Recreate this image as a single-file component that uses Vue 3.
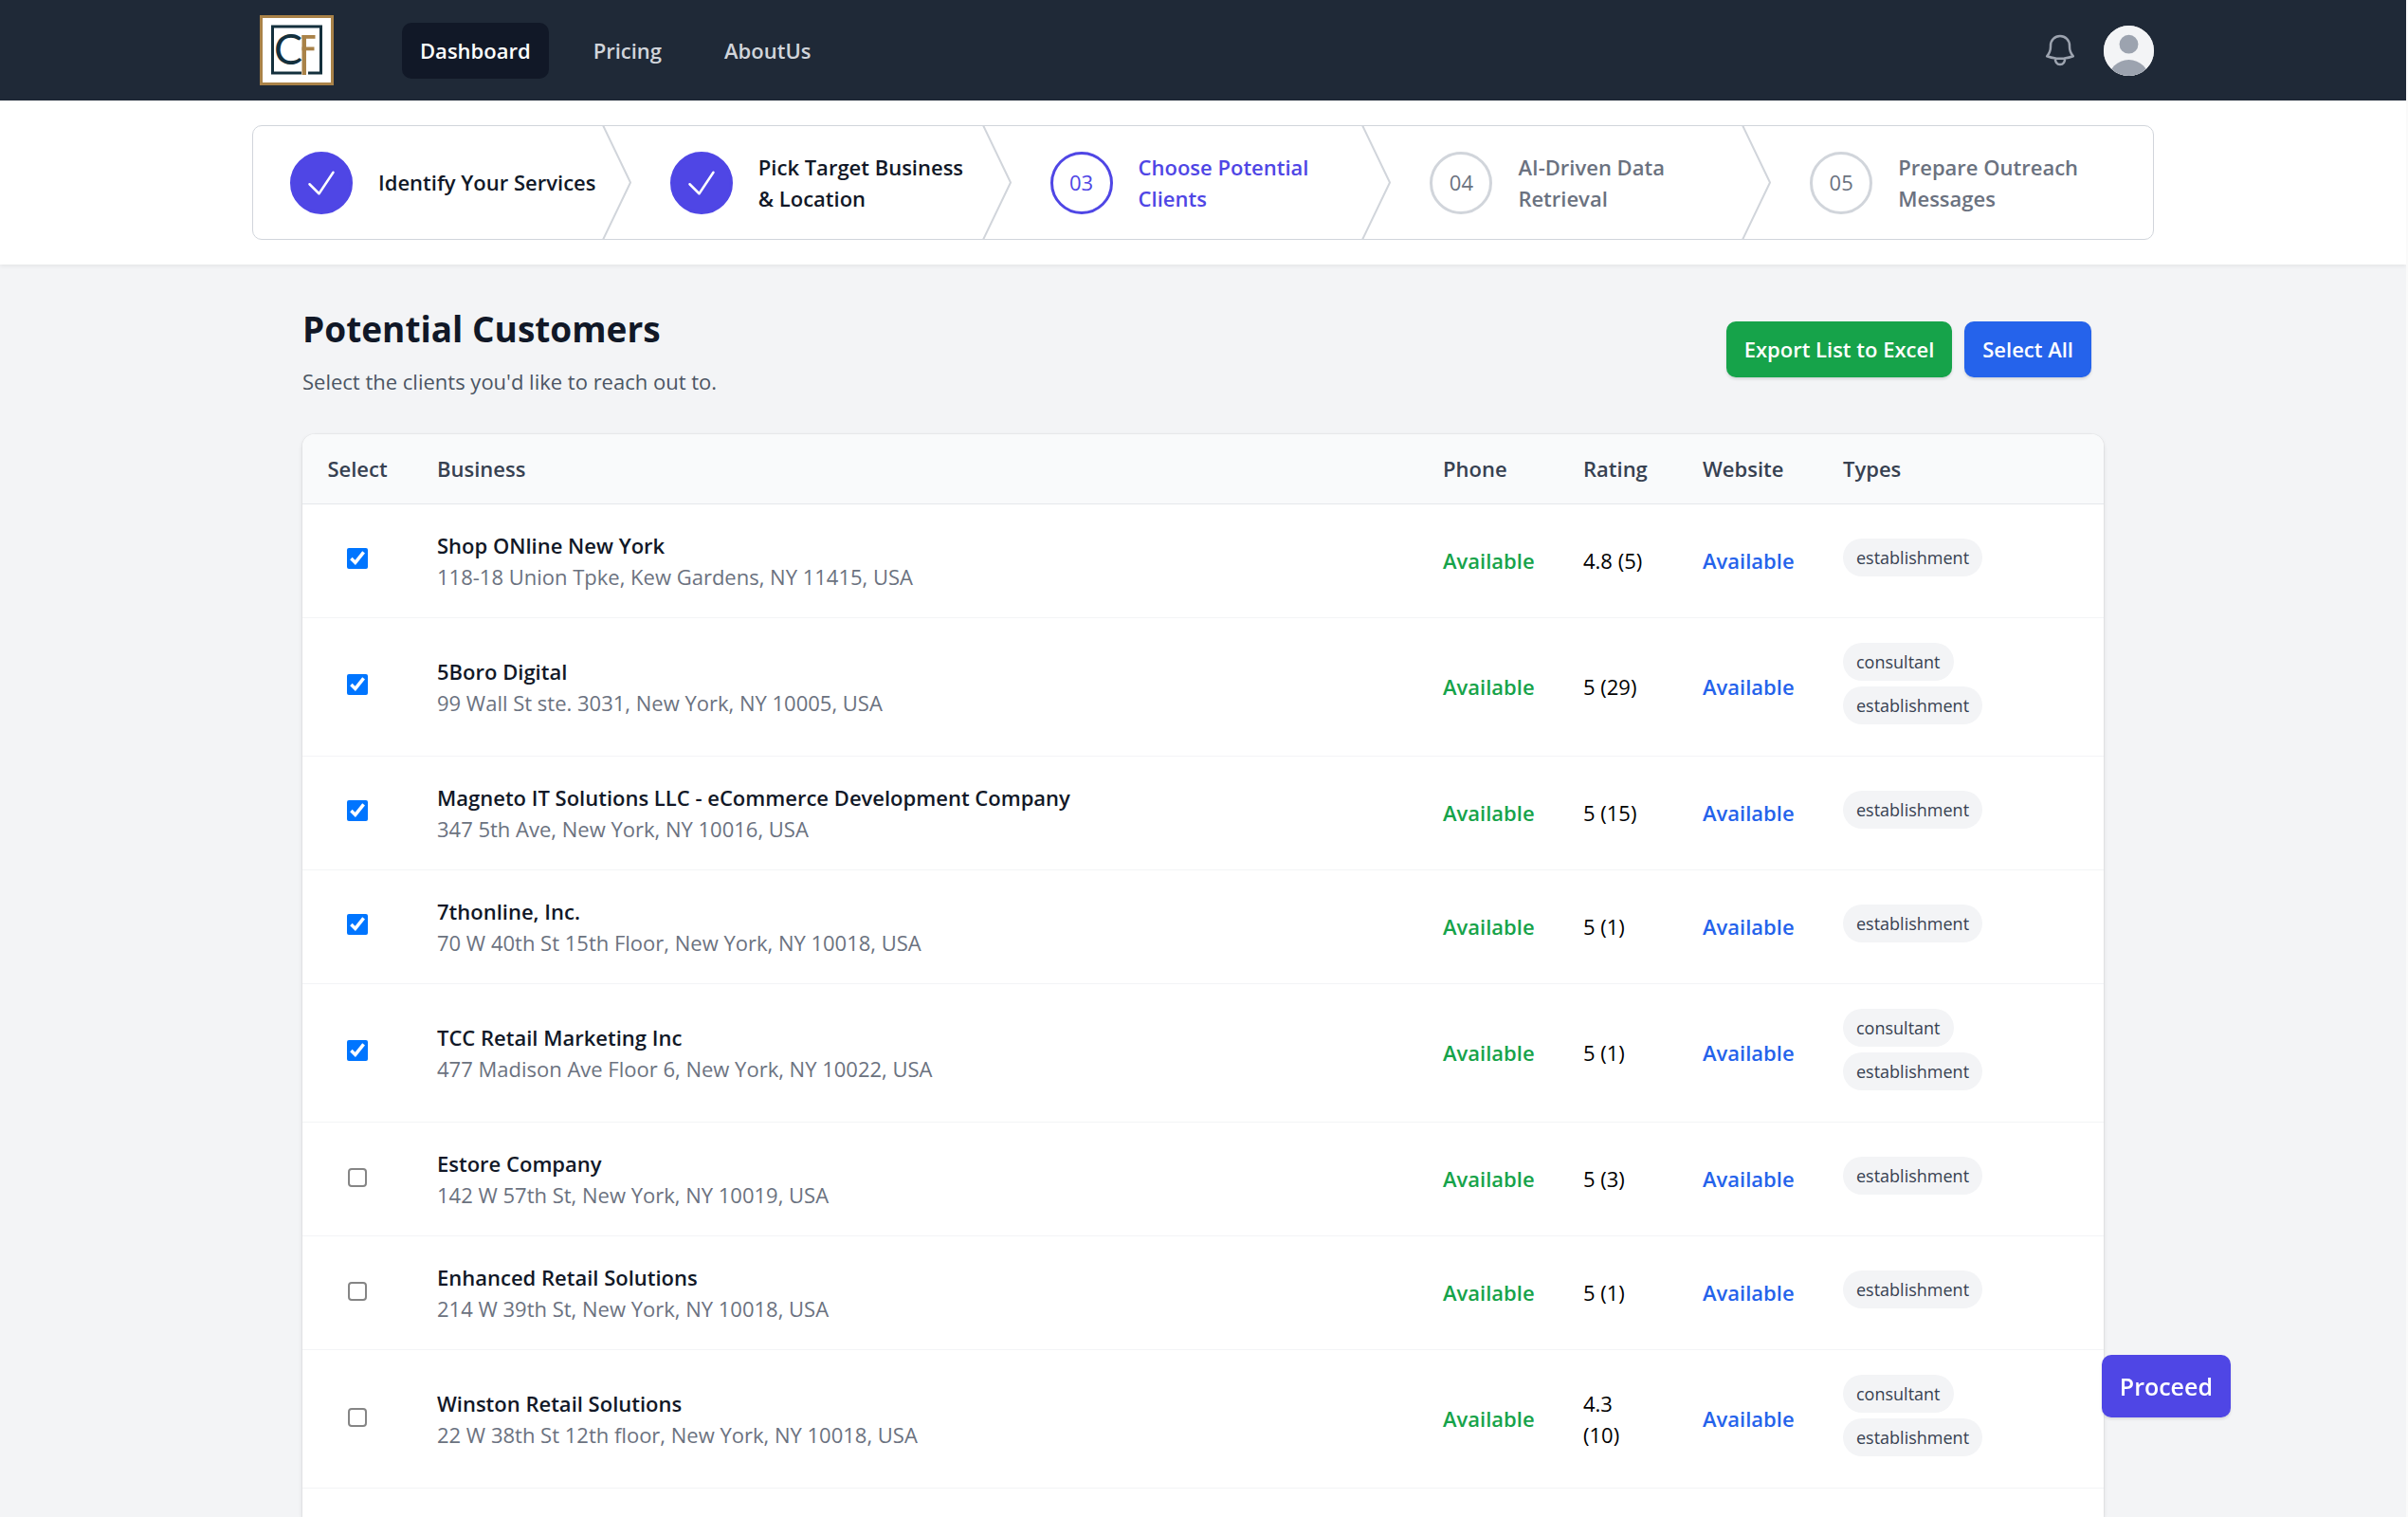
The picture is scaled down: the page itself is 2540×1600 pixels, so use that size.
<script setup>
import { ref } from 'vue'

const navLinks = ['Dashboard', 'Pricing', 'AboutUs']

const steps = [
  { id: '01', name: 'Identify Your Services', status: 'complete' },
  { id: '02', name: 'Pick Target Business & Location', status: 'complete' },
  { id: '03', name: 'Choose Potential Clients', status: 'current' },
  { id: '04', name: 'AI-Driven Data Retrieval', status: 'upcoming' },
  { id: '05', name: 'Prepare Outreach Messages', status: 'upcoming' },
]

const customers = ref([
  { name: 'Shop ONline New York', address: '118-18 Union Tpke, Kew Gardens, NY 11415, USA', rating: '4.8 (5)', types: ['establishment'], selected: true },
  { name: '5Boro Digital', address: '99 Wall St ste. 3031, New York, NY 10005, USA', rating: '5 (29)', types: ['consultant', 'establishment'], selected: true },
  { name: 'Magneto IT Solutions LLC - eCommerce Development Company', address: '347 5th Ave, New York, NY 10016, USA', rating: '5 (15)', types: ['establishment'], selected: true },
  { name: '7thonline, Inc.', address: '70 W 40th St 15th Floor, New York, NY 10018, USA', rating: '5 (1)', types: ['establishment'], selected: true },
  { name: 'TCC Retail Marketing Inc', address: '477 Madison Ave Floor 6, New York, NY 10022, USA', rating: '5 (1)', types: ['consultant', 'establishment'], selected: true },
  { name: 'Estore Company', address: '142 W 57th St, New York, NY 10019, USA', rating: '5 (3)', types: ['establishment'], selected: false },
  { name: 'Enhanced Retail Solutions', address: '214 W 39th St, New York, NY 10018, USA', rating: '5 (1)', types: ['establishment'], selected: false },
  { name: 'Winston Retail Solutions', address: '22 W 38th St 12th floor, New York, NY 10018, USA', rating: '4.3 (10)', types: ['consultant', 'establishment'], selected: false },
])

function selectAll() {
  customers.value.forEach((c) => { c.selected = true })
}
</script>

<template>
  <div class="page">
    <header class="navbar">
      <div class="container navbar-inner">
        <a href="#" class="logo" aria-label="Home">
          <svg width="78" height="74" viewBox="0 0 78 74">
            <rect width="78" height="74" fill="#a98248" />
            <rect x="3" y="3" width="72" height="68" fill="#fff" />
            <rect x="13.5" y="12" width="51" height="49" fill="none" stroke="#14303d" stroke-width="3" />
            <rect x="44" y="58" width="7" height="6" fill="#fff" />
            <text x="15" y="52" class="logo-letter">C</text>
            <g fill="#a98248">
              <rect x="44.5" y="21" width="4.5" height="42" />
              <rect x="44.5" y="21" width="14" height="3.8" />
              <rect x="44.5" y="33.5" width="13" height="3.8" />
            </g>
          </svg>
        </a>
        <nav class="nav">
          <a v-for="(link, i) in navLinks" :key="link" href="#" class="nav-link" :class="{ active: i === 0 }">{{ link }}</a>
        </nav>
        <button type="button" class="icon-button" aria-label="Notifications">
          <svg width="40" height="40" viewBox="0 0 24 24" fill="none" stroke="currentColor" stroke-width="1.5" stroke-linecap="round" stroke-linejoin="round">
            <path d="M14.857 17.082a23.848 23.848 0 005.454-1.31A8.967 8.967 0 0118 9.75v-.7V9A6 6 0 006 9v.75a8.967 8.967 0 01-2.312 6.022c1.733.64 3.56 1.085 5.455 1.31m5.714 0a24.255 24.255 0 01-5.714 0m5.714 0a3 3 0 11-5.714 0" />
          </svg>
        </button>
        <button type="button" class="avatar" aria-label="User menu">
          <svg width="53" height="53" viewBox="0 0 24 24">
            <rect width="24" height="24" fill="#f3f4f6" />
            <circle cx="12" cy="8.9" r="4.5" fill="#9ca3af" />
            <circle cx="12" cy="26.1" r="9.8" fill="#9ca3af" />
          </svg>
        </button>
      </div>
    </header>

    <div class="steps-bar">
      <nav class="container" aria-label="Progress">
        <ol class="steps">
          <li v-for="(step, i) in steps" :key="step.id" class="step" :class="step.status">
            <span class="step-mark">
              <svg v-if="step.status === 'complete'" width="40" height="40" viewBox="0 0 24 24" fill="none" stroke="currentColor" stroke-width="1.5" stroke-linecap="round" stroke-linejoin="round">
                <path d="M4.5 12.75l6 6 9-13.5" />
              </svg>
              <template v-else>{{ step.id }}</template>
            </span>
            <span class="step-name">{{ step.name }}</span>
            <svg v-if="i < steps.length - 1" class="chevron" viewBox="0 0 22 80" fill="none" preserveAspectRatio="none">
              <path d="M0 -2L20 40L0 82" vector-effect="non-scaling-stroke" stroke="currentColor" stroke-width="2" stroke-linejoin="round" />
            </svg>
          </li>
        </ol>
      </nav>
    </div>

    <main class="container content">
      <div class="heading">
        <div>
          <h1>Potential Customers</h1>
          <p>Select the clients you'd like to reach out to.</p>
        </div>
        <div class="actions">
          <button type="button" class="btn export">Export List to Excel</button>
          <button type="button" class="btn select-all" @click="selectAll">Select All</button>
        </div>
      </div>

      <div class="table-card">
        <table>
          <colgroup>
            <col class="col-select" />
            <col />
            <col class="col-link" />
            <col class="col-rating" />
            <col class="col-link" />
            <col class="col-types" />
          </colgroup>
          <thead>
            <tr>
              <th scope="col" class="center">Select</th>
              <th scope="col">Business</th>
              <th scope="col">Phone</th>
              <th scope="col">Rating</th>
              <th scope="col">Website</th>
              <th scope="col">Types</th>
            </tr>
          </thead>
          <tbody>
            <tr v-for="c in customers" :key="c.name">
              <td class="center"><input v-model="c.selected" type="checkbox" :aria-label="c.name" /></td>
              <td>
                <div class="name">{{ c.name }}</div>
                <div class="address">{{ c.address }}</div>
              </td>
              <td class="phone">Available</td>
              <td>{{ c.rating }}</td>
              <td><a href="#" class="website">Available</a></td>
              <td>
                <div class="types">
                  <span v-for="t in c.types" :key="t" class="badge">{{ t }}</span>
                </div>
              </td>
            </tr>
          </tbody>
        </table>
      </div>
    </main>

    <button type="button" class="proceed">Proceed</button>
  </div>
</template>

<style>
body {
  margin: 0;
  overflow: hidden;
}
</style>

<style scoped>
* {
  box-sizing: border-box;
}

.page {
  display: flex;
  flex-direction: column;
  height: 100vh;
  overflow: hidden;
  border-right: 2px solid #fafafa;
  font-family: "Open Sans", "Noto Sans", sans-serif;
  font-size: 22px;
  line-height: 33px;
  color: #000;
  background: #f3f4f6;
}

button {
  font: inherit;
  border: 0;
  padding: 0;
  cursor: pointer;
}

a {
  text-decoration: none;
}

.container {
  width: 100%;
  max-width: 2006px;
  margin: 0 auto;
}

.navbar {
  background: #1f2937;
}

.navbar-inner {
  display: flex;
  align-items: center;
  height: 106px;
  padding-left: 8px;
}

.logo {
  display: flex;
}

.logo-letter {
  font-family: Lato, sans-serif;
  font-size: 45px;
  fill: #14303d;
}

.nav {
  display: flex;
  gap: 28px;
  flex: 1;
  margin-left: 72px;
}

.nav-link {
  padding: 13px 19px;
  border-radius: 10px;
  font-weight: 600;
  color: #d1d5db;
}

.nav-link.active {
  background: #111827;
  color: #fff;
}

.icon-button {
  display: flex;
  margin-right: 26px;
  background: none;
  color: #9ca3af;
}

.avatar {
  display: flex;
  border-radius: 50%;
  overflow: hidden;
}

.steps-bar {
  position: relative;
  padding: 26px 0;
  background: #fff;
  box-shadow: 0 2px 4px rgba(0, 0, 0, 0.06);
}

.steps {
  display: flex;
  margin: 0;
  padding: 0;
  list-style: none;
  border: 1px solid #d1d5db;
  border-radius: 10px;
}

.step {
  position: relative;
  flex: 1 1 0;
  display: flex;
  align-items: center;
  gap: 27px;
  height: 119px;
  padding: 0 39px;
  font-weight: 600;
  color: #6b7280;
}

.step-mark {
  flex: none;
  display: flex;
  align-items: center;
  justify-content: center;
  width: 66px;
  height: 66px;
  border: 3px solid #d1d5db;
  border-radius: 50%;
  font-weight: 500;
}

.complete {
  color: #111827;
}

.complete .step-mark {
  border-color: #4f46e5;
  background: #4f46e5;
  color: #fff;
}

.current {
  color: #4f46e5;
}

.current .step-mark {
  border-color: #4f46e5;
}

.chevron {
  position: absolute;
  top: 0;
  right: 0;
  width: 33px;
  height: 100%;
  color: #d1d5db;
}

.content {
  flex: 1;
  display: flex;
  flex-direction: column;
  padding: 39px 53px 0;
}

.heading {
  display: flex;
  align-items: center;
  justify-content: space-between;
  margin-bottom: 39px;
  padding-right: 13px;
}

h1 {
  margin: 0;
  font-size: 37px;
  line-height: 58px;
  font-weight: 700;
  color: #111827;
}

p {
  margin: 10px 0 0;
  color: #4b5563;
}

.actions {
  display: flex;
  gap: 13px;
}

.btn {
  padding: 13px 19px;
  border-radius: 10px;
  font-weight: 600;
  color: #fff;
  box-shadow: 0 2px 3px rgba(0, 0, 0, 0.12);
}

.export {
  background: #16a34a;
}

.select-all {
  background: #2563eb;
}

.table-card {
  flex: 1;
  overflow: hidden;
  border-radius: 13px 13px 0 0;
  background: #fff;
  box-shadow: 0 0 0 1px rgba(0, 0, 0, 0.03), 0 2px 5px rgba(0, 0, 0, 0.1);
}

table {
  width: 100%;
  table-layout: fixed;
  border-collapse: separate;
  border-spacing: 0;
}

.col-select {
  width: 116px;
}

.col-link {
  width: 148px;
}

.col-rating {
  width: 126px;
}

.col-types {
  width: 301px;
}

th {
  height: 74px;
  padding: 0 26px;
  text-align: left;
  font-weight: 600;
  color: #374151;
  background: #f9fafb;
  border-bottom: 1px solid #e5e7eb;
}

td {
  height: 120px;
  padding: 26px;
  border-bottom: 1px solid #f3f4f6;
}

.center {
  padding: 0;
  text-align: center;
}

input {
  width: 22px;
  height: 22px;
  margin: 0;
  accent-color: #0075ff;
}

input:not(:checked) {
  appearance: none;
  width: 20px;
  height: 20px;
  border: 2px solid #858585;
  border-radius: 4px;
  background: #fff;
}

.name {
  font-weight: 600;
  color: #111827;
}

.address {
  color: #6b7280;
}

.phone {
  font-weight: 600;
  color: #16a34a;
}

.website {
  font-weight: 600;
  color: #2563eb;
}

.types {
  display: flex;
  flex-direction: column;
  align-items: flex-start;
  gap: 6px;
  margin-bottom: 7px;
}

.badge {
  padding: 4px 14px;
  border-radius: 20px;
  font-size: 18px;
  line-height: 32px;
  color: #374151;
  background: #f3f4f6;
}

.proceed {
  position: fixed;
  right: 187px;
  bottom: 105px;
  padding: 16px 19px;
  border-radius: 10px;
  font-size: 25px;
  line-height: 34px;
  font-weight: 600;
  color: #fff;
  background: #4f46e5;
  box-shadow: 0 2px 3px rgba(0, 0, 0, 0.1);
}
</style>
